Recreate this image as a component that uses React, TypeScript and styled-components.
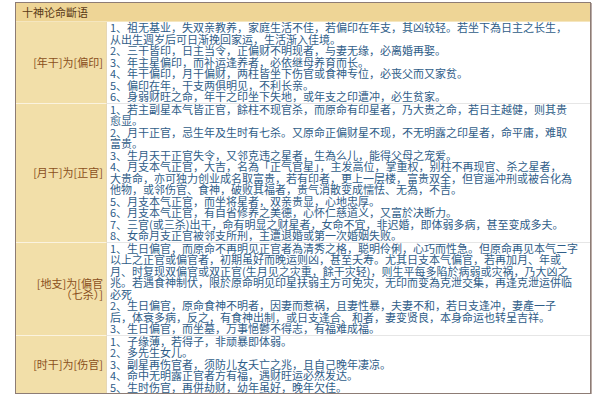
import React from "react";
import styled, { createGlobalStyle } from "styled-components";

const Global = createGlobalStyle`
  html, body { margin: 0; padding: 0; background: #ffffff; }
  body { font-family: "Noto Sans CJK SC", "Noto Sans", sans-serif; }
`;

const Page = styled.div`
  padding: 2px 0 0 15px;
`;

const Table = styled.div`
  width: 574px;
  border: 1px solid #8d7c75;
  box-shadow: 1px 1px 0 #b9aba6;
  display: grid;
  grid-template-columns: 91px 1fr;
  background: #ffffff;
`;

const Header = styled.div`
  grid-column: 1 / -1;
  height: 18px;
  background: #eed596;
  color: #5a3a16;
  font-size: 11px;
  line-height: 18px;
  padding-left: 6px;
  border-bottom: 1px solid #f5e6bf;
`;

const Label = styled.div<{ $first?: boolean }>`
  background: #f2dfa9;
  color: #8a4f20;
  font-size: 11px;
  line-height: 11px;
  display: flex;
  flex-direction: column;
  justify-content: center;
  align-items: flex-end;
  text-align: right;
  padding-right: 3px;
  border-top: ${(p) => (p.$first ? "none" : "1px solid #fbf3df")};
  border-right: 1px solid #e6d7b5;
`;

const Content = styled.div<{ $first?: boolean }>`
  padding-left: 3px;
  color: #2f5d88;
  font-size: 11px;
  line-height: 11.5px;
  white-space: nowrap;
  border-top: ${(p) => (p.$first ? "none" : "1px solid #e6e6e6")};
`;

const Line = styled.div``;

type Row = { label: string[]; lines: string[] };

const rows: Row[] = [
  {
    label: ["[年干]为[偏印]"],
    lines: [
      "1、祖无基业，失双亲教养，家庭生活不佳，若偏印在年支，其凶较轻。若坐下為日主之长生，",
      "从出生週岁后可日渐挽回家运，生活渐入佳境。",
      "2、三干皆印，日主当令，正偏财不明现者，与妻无缘，必离婚再娶。",
      "3、年主星偏印，而补运逢养者，必依继母养育而长。",
      "4、年干偏印，月干偏财，两柱皆坐下伤官或食神专位，必丧父而又家贫。",
      "5、偏印在年，干支两俱明见，不利长亲。",
      "6、身弱财旺之命，年干之印坐下失地，或年支之印遭冲，必生贫家。",
    ],
  },
  {
    label: ["[月干]为[正官]"],
    lines: [
      "1、若主副星本气皆正官，餘柱不现官杀，而原命有印星者，乃大贵之命，若日主越健，则其贵",
      "愈显。",
      "2、月干正官，忌生年及生时有七杀。又原命正偏财星不现，不无明露之印星者，命平庸，难取",
      "富贵。",
      "3、生月天干正官失令，又邻克违之星者，生為么儿，能得父母之宠爱。",
      "4、月支本气正官，大吉，名為「正气官星」，主发高位，掌重权，别柱不再现官、杀之星者，",
      "大贵命，亦可独力创业成名取富贵，若有印者，更上一层楼，富贵双全，但官遥冲刑或被合化為",
      "他物，或邻伤官、食神，破败其福者，贵气消散变成懦怯、无為，不吉。",
      "5、月支本气正官，而坐将星者，双亲贵显，心地忠厚。",
      "6、月支本气正官，有自省修养之美德，心怀仁慈道义，又富於决断力。",
      "7、三官(或三杀)出干，命有明显之财星者，女命不宜，非迟婚，即体弱多病，甚至变成多夫。",
      "8、女命月支正官被邻支所刑，主遭退婚或第一次婚姻失败。",
    ],
  },
  {
    label: ["[地支]为[偏官", "（七杀）]"],
    lines: [
      "1、生日偏官，而原命不再明见正官者為清秀之格，聪明伶俐，心巧而性急。但原命再见本气二字",
      "以上之正官或偏官者，初期虽好而晚运则凶，甚至夭寿。尤其日支本气偏官，若再加月、年或",
      "月、时复现双偏官或双正官(生月见之灾重，餘干灾轻)，则生平每多陷於病弱或灾祸，乃大凶之",
      "兆。若遇食神制伏，限於原命明见印星扶弱主方可免灾，无印而变為克泄交集，再逢克泄运併临",
      "必死",
      "2、生日偏官，原命食神不明者，因妻而惹祸，且妻性暴，夫妻不和，若日支逢冲，妻產一子",
      "后，体衰多病，反之，有食神出制，或日支逢合、和者，妻变贤良，本身命运也转呈吉祥。",
      "3、生日偏官，而坐墓，万事悒鬱不得志，有福难成福。",
    ],
  },
  {
    label: ["[时干]为[伤官]"],
    lines: [
      "1、子缘薄，若得子，非顽暴即体弱。",
      "2、多先生女儿。",
      "3、副星再伤官者，须防儿女夭亡之兆，且自己晚年凄凉。",
      "4、命中无明露正官者方有福，遇财旺运必然发达。",
      "5、生时伤官，再併劫财，幼年虽好，晚年欠佳。",
    ],
  },
];

export default function App() {
  return (
    <>
      <Global />
      <Page>
        <Table>
          <Header>十神论命斷语</Header>
          {rows.map((row, i) => (
            <React.Fragment key={i}>
              <Label $first={i === 0}>
                {row.label.map((l, j) => (
                  <Line key={j}>{l}</Line>
                ))}
              </Label>
              <Content $first={i === 0}>
                {row.lines.map((l, j) => (
                  <Line key={j}>{l}</Line>
                ))}
              </Content>
            </React.Fragment>
          ))}
        </Table>
      </Page>
    </>
  );
}
